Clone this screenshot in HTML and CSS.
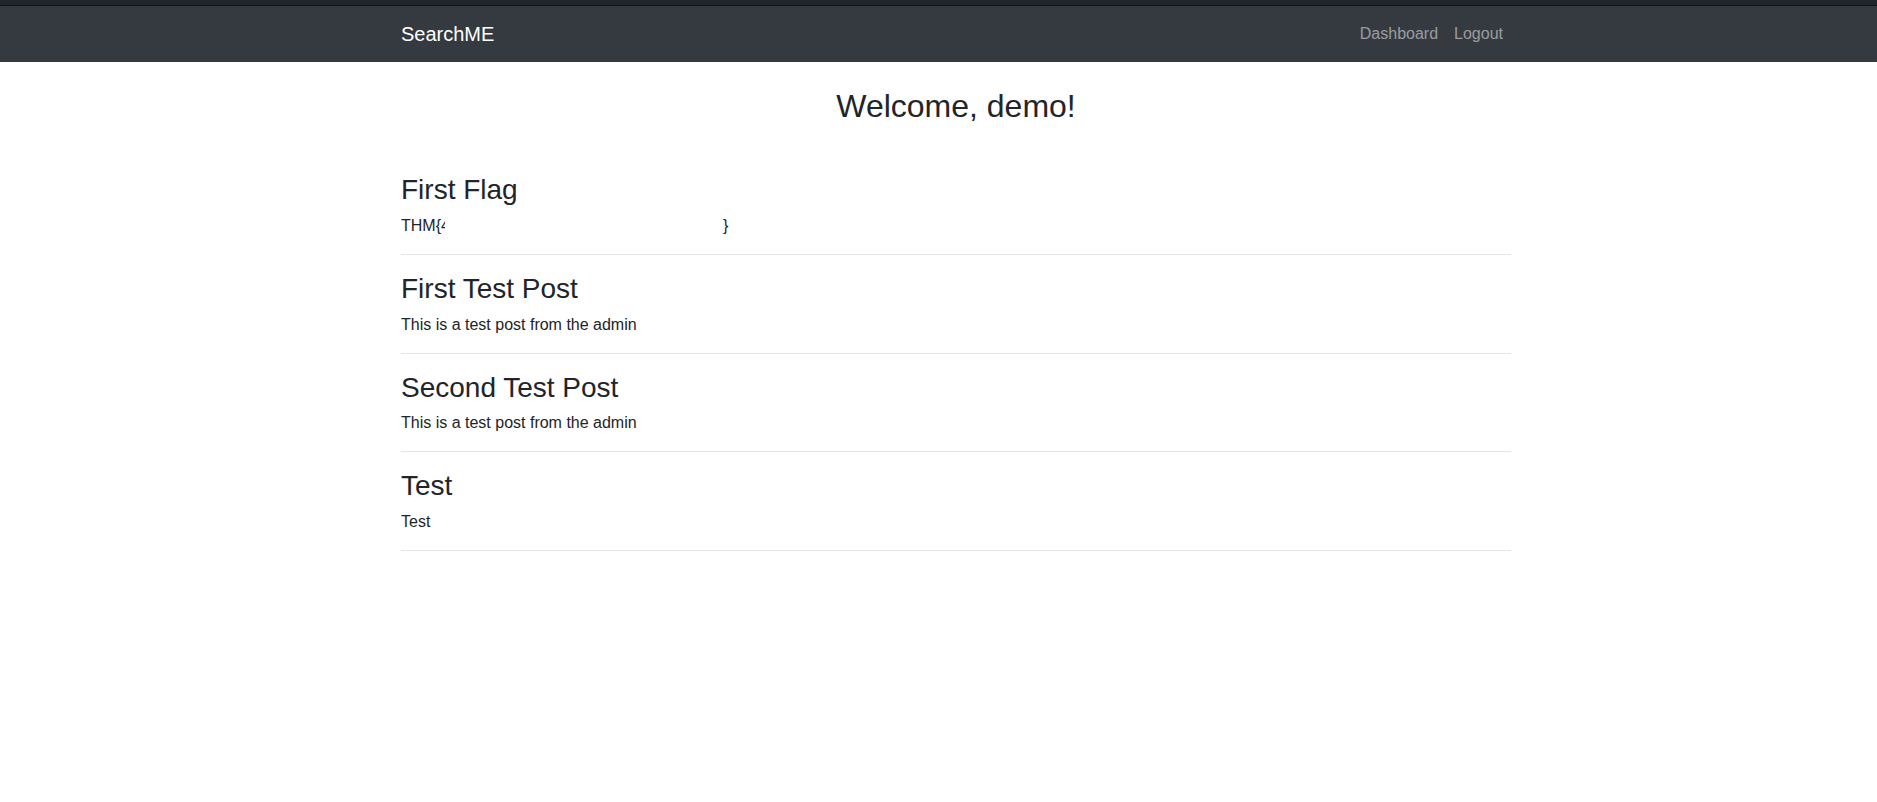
FILE: index.html
```html
<!DOCTYPE html>
<html lang="en">
<head>
<meta charset="utf-8">
<title>SearchME</title>
<link rel="stylesheet" href="styles.css">
</head>
<body>
<div class="topstrip"></div>
<nav class="navbar">
  <div class="container nav-inner">
    <a class="brand" href="#">SearchME</a>
    <ul class="nav-links">
      <li><a href="#">Dashboard</a></li>
      <li><a href="#">Logout</a></li>
    </ul>
  </div>
</nav>
<main class="container main">
  <h2 class="welcome">Welcome, demo!</h2>
  <section class="post">
    <h3>First Flag</h3>
    <p class="flag"><span>THM{</span><span class="clip">4</span><span class="redact"></span><span>}</span></p>
    <hr>
  </section>
  <section class="post">
    <h3>First Test Post</h3>
    <p>This is a test post from the admin</p>
    <hr>
  </section>
  <section class="post">
    <h3>Second Test Post</h3>
    <p>This is a test post from the admin</p>
    <hr>
  </section>
  <section class="post">
    <h3>Test</h3>
    <p>Test</p>
    <hr>
  </section>
</main>
</body>
</html>
```
FILE: styles.css
```css
* { box-sizing: border-box; }
html, body { margin: 0; padding: 0; }
body {
  font-family: "Liberation Sans", Arial, sans-serif;
  font-size: 16px;
  line-height: 1.5;
  color: #212529;
  background: #fff;
}
.topstrip {
  height: 6px;
  background: #21252d;
  border-bottom: 1px solid #111317;
}
.container {
  width: 1110px;
  margin-left: calc((100% - 35px - 1110px) / 2 + 35px);
}
.navbar {
  background: #343a40;
  height: 56px;
}
.nav-inner {
  height: 56px;
  display: flex;
  align-items: center;
  justify-content: space-between;
}
.brand {
  color: #fff;
  font-size: 20px;
  line-height: 30px;
  text-decoration: none;
}
.nav-links {
  list-style: none;
  margin: 0;
  padding: 0;
  display: flex;
}
.nav-links a {
  display: block;
  padding: 8px;
  color: rgba(255,255,255,.5);
  text-decoration: none;
  font-size: 16px;
  line-height: 24px;
}
.main { padding-top: 25px; }
.welcome {
  margin: 0 0 47px;
  font-size: 32px;
  font-weight: 500;
  line-height: 1.2;
  text-align: center;
}
.post h3 {
  margin: 0 0 7px;
  padding-top: 1px;
  font-size: 28px;
  font-weight: 500;
  line-height: 1.2;
}
.post p { margin: 0 0 16px; }
.post hr {
  margin: 0 0 16px;
  border: 0;
  border-top: 1px solid rgba(0,0,0,.1);
}
.flag { display: flex; }
.clip {
  display: inline-block;
  width: 4px;
  overflow: hidden;
}
.redact {
  display: inline-block;
  width: 278px;
}
```
